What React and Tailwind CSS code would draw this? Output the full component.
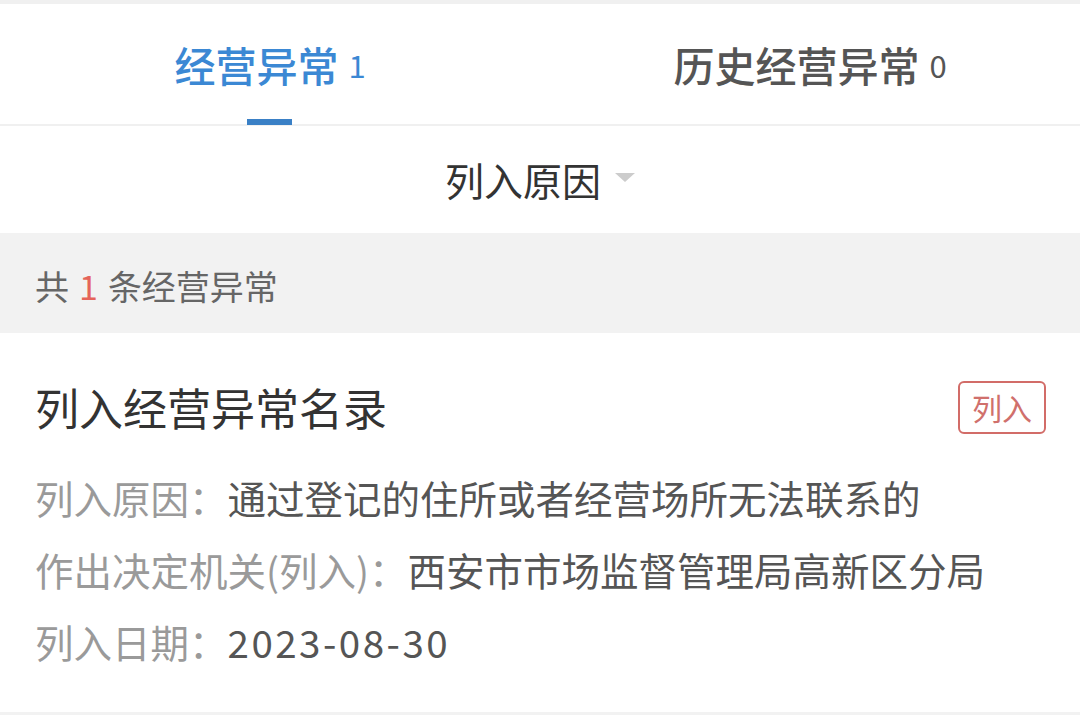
const font = { fontFamily: '"Noto Sans CJK SC", "Noto Sans", sans-serif' };

function Tab({ label, count, active }) {
  return (
    <div className="relative flex flex-1 items-center justify-center">
      <span
        className={`text-[41px] font-medium leading-none ${
          active ? "text-[#3b88d4]" : "text-[#555555]"
        }`}
      >
        {label}
      </span>
      <span
        className={`ml-[10px] text-[31px] leading-none ${
          active ? "text-[#3b88d4]" : "text-[#555555]"
        }`}
      >
        {count}
      </span>
      {active && (
        <span className="absolute bottom-[-1px] left-1/2 h-[6px] w-[45px] -translate-x-[23px] bg-[#3a80c6]" />
      )}
    </div>
  );
}

function InfoRow({ label, value, wide }) {
  return (
    <div className="flex h-[72px] items-center text-[38.5px] leading-none">
      <span className="text-[#9a9a9a]">{label}</span>
      <span className={`text-[#555555] ${wide ? "tracking-[2.5px]" : ""}`}>{value}</span>
    </div>
  );
}

export default function App() {
  return (
    <div className="h-[715px] w-[1080px] overflow-hidden bg-white" style={font}>
      <div className="h-[4px] bg-[#f0f0f0]" />

      <div className="flex h-[122px] border-b-2 border-[#f0f0f0]">
        <Tab label="经营异常" count="1" active />
        <Tab label="历史经营异常" count="0" />
      </div>

      <div className="flex h-[107px] items-center justify-center">
        <span className="text-[39px] leading-none text-[#333333]">列入原因</span>
        <svg width="20" height="9" viewBox="0 0 20 9" className="ml-[14px] mt-[-4px]">
          <path d="M0 0 H20 L10 9 Z" fill="#cccccc" />
        </svg>
      </div>

      <div className="flex h-[100px] items-center bg-[#f2f2f2] pl-[35px] pt-[6px] text-[34px] leading-none text-[#666666]">
        <span>共</span>
        <span className="mx-[10px] text-[#e5645a]">1</span>
        <span>条经营异常</span>
      </div>

      <div className="flex h-[379px] flex-col px-[35px] pt-[20px]">
        <div className="flex h-[108px] items-center justify-between">
          <span className="text-[44px] leading-none text-[#333333]">列入经营异常名录</span>
          <span className="mr-[-1px] flex h-[53px] w-[88px] items-center justify-center rounded-[6px] border-2 border-[#d26c68] text-[30px] leading-none text-[#d0706c]">
            列入
          </span>
        </div>
        <div className="flex flex-col">
          <InfoRow label="列入原因：" value="通过登记的住所或者经营场所无法联系的" />
          <InfoRow label="作出决定机关(列入)：" value="西安市市场监督管理局高新区分局" />
          <InfoRow label="列入日期：" value="2023-08-30" wide />
        </div>
      </div>

      <div className="h-[10px] bg-[#f2f2f2]" />
    </div>
  );
}
